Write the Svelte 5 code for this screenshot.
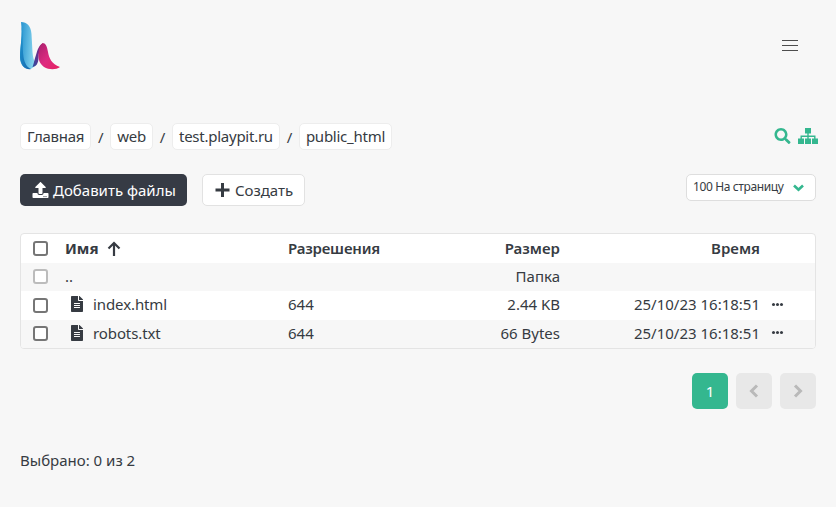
<script>
  const rows = [
    { name: 'index.html', perm: '644', size: '2.44 KB', time: '25/10/23 16:18:51' },
    { name: 'robots.txt', perm: '644', size: '66 Bytes', time: '25/10/23 16:18:51' }
  ];
</script>

<div class="page">
  <header class="top">
    <svg class="logo" width="42" height="50" viewBox="0 0 42 50">
      <defs>
        <linearGradient id="b" x1="0" y1="0" x2="1" y2="0.2"><stop offset="0" stop-color="#1f8fce"/><stop offset="1" stop-color="#8ad6ee"/></linearGradient>
        <linearGradient id="b2" x1="0" y1="0" x2="1" y2="1"><stop offset="0" stop-color="#1f9ad2"/><stop offset="1" stop-color="#1766ad"/></linearGradient>
        <linearGradient id="m" x1="0" y1="1" x2="1" y2="0"><stop offset="0" stop-color="#2c4f9f"/><stop offset="0.6" stop-color="#6d2c8c"/><stop offset="1" stop-color="#a81f6c"/></linearGradient>
        <linearGradient id="p" x1="0" y1="0" x2="1" y2="1"><stop offset="0" stop-color="#a81f6c"/><stop offset="0.5" stop-color="#dd2a80"/><stop offset="1" stop-color="#e6215f"/></linearGradient>
      </defs>
      <path d="M1 0C7 0 11 4 11.500 12L12.500 30C13 36 14 39 16 41C14 46 11 47.500 8 47C4 46 0 43 0 35C0 24 3 13 1 0Z" fill="url(#b)"/>
      <path d="M1 0C3.500 12 2 24 3.500 35C4.500 41 7 45.500 11 47C6 48 1 45 0 35C0 24 3 13 1 0Z" fill="url(#b2)"/>
      <path d="M12.500 45C14 41 14.500 37 16 33C17.500 28 19 23 22.500 21.500C20 26 18.500 31 18.500 36C18.500 41 16 45 12.500 45Z" fill="url(#m)"/>
      <path d="M22.500 21C25.500 21 27 24 28 30C29 36 31.500 42 40 45C36 48 29 48 24 45C20 42 18.500 38 18.500 34C18.500 28 20 23 22.500 21Z" fill="url(#p)"/>
    </svg>
    <button class="burger" aria-label="Меню"><span></span><span></span><span></span></button>
  </header>

  <div class="crumb-row">
    <nav class="crumbs">
      <a href="#a">Главная</a><i>/</i><a href="#a">web</a><i>/</i><a href="#a">test.playpit.ru</a><i>/</i><a href="#a">public_html</a>
    </nav>
    <div class="tools">
      <svg width="17" height="16" viewBox="0 0 512 512"><path fill="#34b78f" d="M505 442.700 405.300 343c-4.500-4.500-10.600-7-17-7H372c27.600-35.300 44-79.700 44-128C416 93.100 322.900 0 208 0S0 93.100 0 208s93.100 208 208 208c48.300 0 92.700-16.400 128-44v16.300c0 6.400 2.500 12.500 7 17l99.700 99.700c9.400 9.400 24.600 9.400 33.900 0l28.300-28.300c9.400-9.400 9.400-24.600.1-34zM208 336c-70.700 0-128-57.200-128-128 0-70.700 57.200-128 128-128 70.700 0 128 57.200 128 128 0 70.700-57.200 128-128 128z"/></svg>
      <svg width="20" height="16" viewBox="0 0 20 16"><path fill="#34b78f" d="M7 0h6v5.500h-6zM0 10.500h6V16H0zM7 10.500h6V16H7zM14 10.500h6V16h-6z"/><path fill="#34b78f" d="M9.300 5h1.400v2.500H17.500v3.500h-1.400V9H10.700v2H9.300V9H3.900v2H2.500V7.500h6.800z"/></svg>
    </div>
  </div>

  <div class="action-row">
    <div class="actions">
      <button class="btn dark">
        <svg width="17" height="16" viewBox="0 0 512 512"><path fill="#fff" d="M296 384h-80c-13.300 0-24-10.700-24-24V192h-87.700c-17.800 0-26.700-21.500-14.100-34.100L242.300 5.700c7.500-7.500 19.800-7.500 27.300 0l152.200 152.200c12.600 12.600 3.700 34.100-14.100 34.100H320v168c0 13.300-10.700 24-24 24zm216-8v112c0 13.300-10.700 24-24 24H24c-13.300 0-24-10.700-24-24V376c0-13.300 10.700-24 24-24h136v8c0 30.900 25.100 56 56 56h80c30.900 0 56-25.100 56-56v-8h136c13.300 0 24 10.700 24 24zm-124 88c0-11-9-20-20-20s-20 9-20 20 9 20 20 20 20-9 20-20zm64 0c0-11-9-20-20-20s-20 9-20 20 9 20 20 20 20-9 20-20z"/></svg>
        Добавить файлы
      </button>
      <button class="btn light">
        <svg width="15" height="14" viewBox="0 0 14 14"><path fill="#363b42" d="M5.500 0h3v5.500H14v3H8.500V14h-3V8.500H0v-3h5.500z"/></svg>
        Создать
      </button>
    </div>
    <div class="select">
      <span>100 На страницу</span>
      <svg width="11" height="8" viewBox="0 0 11 8"><path fill="none" stroke="#34b78f" stroke-width="2.600" d="M1 1.500l4.500 4.300L10 1.500"/></svg>
    </div>
  </div>

  <div class="table">
    <div class="row head">
      <span class="check"></span>
      <span class="c-name">Имя
        <svg width="14" height="15" viewBox="0 0 14 15"><path fill="none" stroke="#363b42" stroke-width="2.200" d="M7 15V2M1.500 7.500 7 2l5.500 5.500"/></svg>
      </span>
      <span class="c-perm">Разрешения</span>
      <span class="c-size">Размер</span>
      <span class="c-time">Время</span>
    </div>
    <div class="row alt">
      <span class="check dim"></span>
      <span class="c-name">..</span>
      <span class="c-perm"></span>
      <span class="c-size">Папка</span>
      <span class="c-time"></span>
    </div>
    {#each rows as r, i}
      <div class="row" class:alt={i % 2 === 1}>
        <span class="check"></span>
        <span class="c-name file">
          <svg width="12" height="16" viewBox="0 0 384 512"><path fill="#363b42" d="M224 136V0H24C10.700 0 0 10.700 0 24v464c0 13.300 10.700 24 24 24h336c13.300 0 24-10.700 24-24V160H248c-13.200 0-24-10.800-24-24zm64 236c0 6.600-5.400 12-12 12H108c-6.600 0-12-5.400-12-12v-8c0-6.600 5.400-12 12-12h168c6.600 0 12 5.400 12 12v8zm0-64c0 6.600-5.400 12-12 12H108c-6.600 0-12-5.400-12-12v-8c0-6.600 5.400-12 12-12h168c6.600 0 12 5.400 12 12v8zm0-72v8c0 6.600-5.400 12-12 12H108c-6.600 0-12-5.400-12-12v-8c0-6.600 5.400-12 12-12h168c6.600 0 12 5.400 12 12zm96-114.100v6.100H256V0h6.100c6.400 0 12.500 2.500 17 7l97.900 98c4.500 4.500 7 10.600 7 16.900z"/></svg>
          {r.name}
        </span>
        <span class="c-perm">{r.perm}</span>
        <span class="c-size">{r.size}</span>
        <span class="c-time">{r.time}</span>
        <span class="dots"><b></b><b></b><b></b></span>
      </div>
    {/each}
  </div>

  <div class="pager">
    <span class="pg on">1</span>
    <span class="pg"><svg width="10" height="14" viewBox="0 0 10 14"><path fill="none" stroke="#b9b9b9" stroke-width="3" d="M8 1.500 2.500 7 8 12.500"/></svg></span>
    <span class="pg"><svg width="10" height="14" viewBox="0 0 10 14"><path fill="none" stroke="#b9b9b9" stroke-width="3" d="M2 1.500 7.500 7 2 12.500"/></svg></span>
  </div>

  <p class="foot">Выбрано: 0 из 2</p>
</div>

<style>
  :global(body) {
    margin: 0;
    background: #f7f7f7;
  }
  .page {
    box-sizing: border-box;
    height: 507px;
    padding: 0 20px;
    font-family: "Noto Sans", "Open Sans", sans-serif;
    font-size: 15px;
    color: #363b42;
  }
  .top {
    height: 123px;
    display: flex;
    justify-content: space-between;
    align-items: flex-start;
  }
  .logo {
    margin-top: 22px;
  }
  .burger {
    margin: 40px 18px 0 0;
    padding: 0;
    border: 0;
    background: none;
    width: 16px;
    display: flex;
    flex-direction: column;
    gap: 4px;
  }
  .burger span {
    display: block;
    height: 1px;
    background: #4d4d4d;
  }
  .crumb-row, .action-row {
    display: flex;
    justify-content: space-between;
  }
  .crumbs {
    display: flex;
    align-items: center;
    letter-spacing: -0.25px;
  }
  .crumbs a {
    height: 27px;
    line-height: 24px;
    box-sizing: border-box;
    padding: 0 6px;
    background: #fff;
    border: 1px solid #ededed;
    border-radius: 5px;
    color: #363b42;
    text-decoration: none;
  }
  .crumbs i {
    width: 19px;
    text-align: center;
    font-style: normal;
  }
  .tools {
    display: flex;
    gap: 7px;
    align-items: center;
    padding-bottom: 2px;
    margin-right: -2px;
  }
  .action-row {
    margin-top: 24px;
    align-items: flex-start;
  }
  .actions {
    display: flex;
    gap: 15px;
  }
  .btn {
    height: 32px;
    box-sizing: border-box;
    border-radius: 5px;
    font: inherit;
    display: flex;
    align-items: center;
    padding: 0 12px;
    gap: 4px;
  }
  .dark {
    background: #363b45;
    border: 0;
    color: #fff;
    padding-right: 11px;
  }
  .light {
    background: #fff;
    border: 1px solid #e2e2e2;
    color: #363b42;
    padding-right: 11px;
    gap: 5px;
  }
  .select {
    width: 130px;
    height: 27px;
    box-sizing: border-box;
    background: #fff;
    border: 1px solid #dedede;
    border-radius: 5px;
    display: flex;
    justify-content: space-between;
    align-items: center;
    padding: 0 11px 2px 6px;
    font-size: 12px;
    letter-spacing: -0.38px;
  }
  .select svg {
    margin-top: 2px;
  }
  .table {
    margin-top: 27px;
    background: #fff;
    border: 1px solid #e4e4e4;
    border-radius: 4px;
    overflow: hidden;
  }
  .row {
    height: 28.500px;
    display: grid;
    grid-template-columns: 44px 223px 130px 142px 200px 1fr;
    align-items: center;
  }
  .alt {
    background: #f7f7f7;
  }
  .head {
    font-weight: 600;
  }
  .check {
    box-sizing: border-box;
    width: 15px;
    height: 15px;
    margin-left: 12px;
    border: 2px solid #767676;
    border-radius: 3px;
    background: #fff;
  }
  .check.dim {
    border-color: #bcbcbc;
  }
  .c-name {
    display: flex;
    align-items: center;
    gap: 8px;
  }
  .head .c-name {
    font-weight: 700;
  }
  .head .c-perm {
    letter-spacing: -0.2px;
  }
  .row:not(.head) .c-name,
  .row:not(.head) .c-perm,
  .row:not(.head) .c-size,
  .row:not(.head) .c-time,
  .dots {
    margin-bottom: 2px;
  }
  .file {
    padding-left: 6px;
    gap: 10px;
    letter-spacing: -0.1px;
  }
  .c-size, .c-time {
    text-align: right;
  }
  .dots {
    display: flex;
    gap: 1px;
    margin-left: 12px;
  }
  .dots b {
    width: 3px;
    height: 3px;
    border-radius: 50%;
    background: #363b42;
  }
  .pager {
    margin-top: 24px;
    display: flex;
    justify-content: flex-end;
    gap: 8px;
  }
  .pg {
    width: 36px;
    height: 36px;
    border-radius: 5px;
    background: #e8e8e8;
    display: flex;
    align-items: center;
    justify-content: center;
  }
  .pg.on {
    background: #34b78f;
    color: #fff;
  }
  .foot {
    margin: 40px 0 0;
    line-height: 22px;
  }
</style>
